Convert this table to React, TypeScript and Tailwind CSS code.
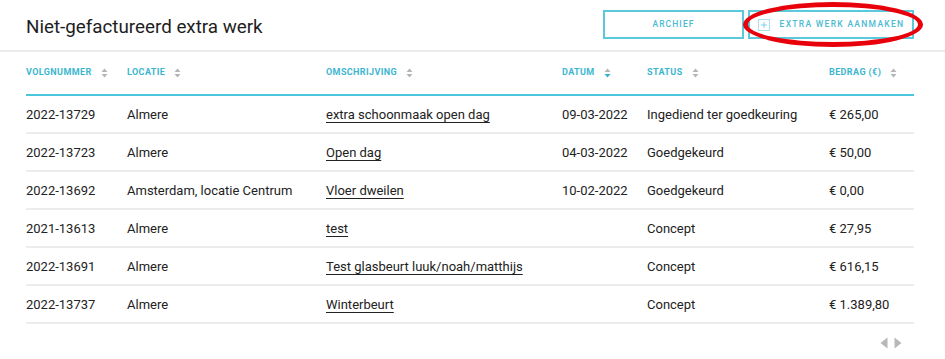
import React from 'react';

interface Row {
  nr: string;
  locatie: string;
  omschrijving: string;
  datum: string;
  status: string;
  bedrag: string;
}

const rows: Row[] = [
  { nr: '2022-13729', locatie: 'Almere', omschrijving: 'extra schoonmaak open dag', datum: '09-03-2022', status: 'Ingediend ter goedkeuring', bedrag: '€ 265,00' },
  { nr: '2022-13723', locatie: 'Almere', omschrijving: 'Open dag', datum: '04-03-2022', status: 'Goedgekeurd', bedrag: '€ 50,00' },
  { nr: '2022-13692', locatie: 'Amsterdam, locatie Centrum', omschrijving: 'Vloer dweilen', datum: '10-02-2022', status: 'Goedgekeurd', bedrag: '€ 0,00' },
  { nr: '2021-13613', locatie: 'Almere', omschrijving: 'test', datum: '', status: 'Concept', bedrag: '€ 27,95' },
  { nr: '2022-13691', locatie: 'Almere', omschrijving: 'Test glasbeurt luuk/noah/matthijs', datum: '', status: 'Concept', bedrag: '€ 616,15' },
  { nr: '2022-13737', locatie: 'Almere', omschrijving: 'Winterbeurt', datum: '', status: 'Concept', bedrag: '€ 1.389,80' },
];

const columns = [
  { label: 'Volgnummer', w: 'w-[101px]' },
  { label: 'Locatie', w: 'w-[199px]' },
  { label: 'Omschrijving', w: 'w-[236px]' },
  { label: 'Datum', w: 'w-[85px]', active: true },
  { label: 'Status', w: 'w-[182px]' },
  { label: 'Bedrag (€)', w: 'w-[85px]' },
];

const SortIcon: React.FC<{ active?: boolean }> = ({ active }) => (
  <svg width="7" height="10" viewBox="0 0 7 10" className="ml-[9px]">
    <path d="M3.5 0.5 L6.5 4 L0.5 4 Z" fill="#b5b5b5" />
    <path d="M0.5 6 L6.5 6 L3.5 9.5 Z" fill={active ? '#2fb4d0' : '#b5b5b5'} />
  </svg>
);

const PlusBox = () => (
  <svg width="12" height="12" viewBox="0 0 12 12" className="mr-[10px] mt-[1px]">
    <rect x="0.5" y="0.5" width="11" height="11" fill="none" stroke="#a8e0ec" />
    <path d="M6 3 V9 M3 6 H9" stroke="#7fd0e2" strokeWidth="1" />
  </svg>
);

export default function App() {
  return (
    <div className="w-[945px] h-[359px] bg-white text-[#222] font-['Roboto',sans-serif] overflow-hidden">
      <div className="flex items-center justify-between h-[52px] pl-[26px] pr-[31px] border-b-2 border-[#ebebeb]">
        <h1 className="text-[18.8px] font-normal text-[#1e1e1e] mt-[5px]">Niet-gefactureerd extra werk</h1>
        <div className="flex gap-[4px] mt-[-1px]">
          <button className="w-[141px] h-[29px] border-2 border-[#5cc8dc] text-[#4cbad3] text-[8.5px] font-medium tracking-[1.1px]">
            ARCHIEF
          </button>
          <div className="relative">
            <button className="flex items-center justify-center w-[166px] h-[29px] border-2 border-[#5cc8dc] text-[#4cbad3] text-[8.5px] font-medium tracking-[1.3px]">
              <PlusBox />
              EXTRA WERK AANMAKEN
            </button>
            <div className="absolute left-[-5px] top-[-8px] w-[180px] h-[45px] rounded-[50%] border-[5px] border-[#e8000b] pointer-events-none" />
          </div>
        </div>
      </div>
      <div className="pl-[26px] pr-[31px]">
        <div className="flex h-[44px] items-center border-b-2 border-[#4cc6dc]">
          {columns.map(c => (
            <div key={c.label} className={`${c.w} flex items-center text-[9px] font-bold uppercase text-[#3cb6d0] tracking-[0.4px]`}>
              {c.label}
              <SortIcon active={c.active} />
            </div>
          ))}
        </div>
        {rows.map(r => (
          <div key={r.nr} className="flex h-[38px] items-center border-b-2 border-[#ececec] text-[13px] pt-[1px]">
            <div className="w-[101px]">{r.nr}</div>
            <div className="w-[199px]">{r.locatie}</div>
            <div className="w-[236px]"><span className="underline underline-offset-[3px]">{r.omschrijving}</span></div>
            <div className="w-[85px]">{r.datum}</div>
            <div className="w-[182px]">{r.status}</div>
            <div className="w-[85px]">{r.bedrag}</div>
          </div>
        ))}
        <div className="flex justify-end pr-[12px] pt-[13px] gap-[6px]">
          <svg width="8" height="12" viewBox="0 0 8 12"><path d="M7.5 0.5 V11.5 L0.5 6 Z" fill="#b8b8b8" /></svg>
          <svg width="8" height="12" viewBox="0 0 8 12"><path d="M0.5 0.5 V11.5 L7.5 6 Z" fill="#b8b8b8" /></svg>
        </div>
      </div>
    </div>
  );
}
